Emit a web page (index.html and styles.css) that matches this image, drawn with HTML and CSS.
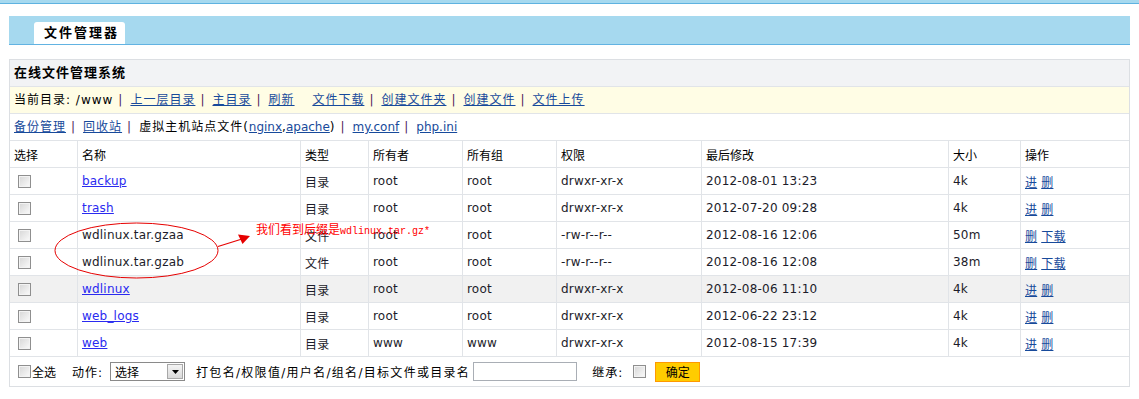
FILE: index.html
```html
<!DOCTYPE html>
<html lang="zh-CN">
<head>
  <meta charset="UTF-8" />
  <title>文件管理器</title>
  <link rel="stylesheet" href="styles.css">
</head>
<body>
  <div class="topline"></div>

  <div class="page">
    <div class="tabbar">
      <span class="tab">文件管理器</span>
    </div>

    <div class="panel">
      <div class="panel-title">在线文件管理系统</div>

      <div class="navbar pathbar">
        当前目录: <span class="cur">/www</span><span class="sep">|</span><a href="#">上一层目录</a><span class="sep">|</span><a href="#">主目录</a><span class="sep">|</span><a href="#">刷新</a>
        <a href="#" class="far">文件下载</a><span class="sep">|</span><a href="#">创建文件夹</a><span class="sep">|</span><a href="#">创建文件</a><span class="sep">|</span><a href="#">文件上传</a>
      </div>

      <div class="navbar">
        <a href="#">备份管理</a><span class="sep">|</span><a href="#">回收站</a><span class="sep">|</span>虚拟主机站点文件(<a href="#" class="latin">nginx</a><span class="latin">,</span><a href="#" class="latin">apache</a>)<span class="sep">|</span><a href="#" class="latin">my.conf</a><span class="sep">|</span><a href="#" class="latin">php.ini</a>
      </div>

      <table class="files">
        <colgroup>
          <col style="width:68px"><col style="width:223px"><col style="width:68px">
          <col style="width:94px"><col style="width:94px"><col style="width:145px">
          <col style="width:247px"><col style="width:72px"><col style="width:108px">
        </colgroup>
        <thead>
          <tr>
            <th>选择</th><th>名称</th><th>类型</th><th>所有者</th><th>所有组</th>
            <th>权限</th><th>最后修改</th><th>大小</th><th>操作</th>
          </tr>
        </thead>
        <tbody>
          <tr>
            <td><input type="checkbox" class="cb"></td>
            <td><a href="#" class="dir">backup</a></td>
            <td>目录</td><td>root</td><td>root</td><td>drwxr-xr-x</td>
            <td>2012-08-01 13:23</td><td>4k</td>
            <td class="ops"><a href="#">进</a> <a href="#">删</a></td>
          </tr>
          <tr>
            <td><input type="checkbox" class="cb"></td>
            <td><a href="#" class="dir">trash</a></td>
            <td>目录</td><td>root</td><td>root</td><td>drwxr-xr-x</td>
            <td>2012-07-20 09:28</td><td>4k</td>
            <td class="ops"><a href="#">进</a> <a href="#">删</a></td>
          </tr>
          <tr>
            <td><input type="checkbox" class="cb"></td>
            <td>wdlinux.tar.gzaa</td>
            <td>文件</td><td>root</td><td>root</td><td>-rw-r--r--</td>
            <td>2012-08-16 12:06</td><td>50m</td>
            <td class="ops"><a href="#">删</a> <a href="#">下载</a></td>
          </tr>
          <tr>
            <td><input type="checkbox" class="cb"></td>
            <td>wdlinux.tar.gzab</td>
            <td>文件</td><td>root</td><td>root</td><td>-rw-r--r--</td>
            <td>2012-08-16 12:08</td><td>38m</td>
            <td class="ops"><a href="#">删</a> <a href="#">下载</a></td>
          </tr>
          <tr class="hover">
            <td><input type="checkbox" class="cb"></td>
            <td><a href="#" class="dir">wdlinux</a></td>
            <td>目录</td><td>root</td><td>root</td><td>drwxr-xr-x</td>
            <td>2012-08-06 11:10</td><td>4k</td>
            <td class="ops"><a href="#">进</a> <a href="#">删</a></td>
          </tr>
          <tr>
            <td><input type="checkbox" class="cb"></td>
            <td><a href="#" class="dir">web_logs</a></td>
            <td>目录</td><td>root</td><td>root</td><td>drwxr-xr-x</td>
            <td>2012-06-22 23:12</td><td>4k</td>
            <td class="ops"><a href="#">进</a> <a href="#">删</a></td>
          </tr>
          <tr>
            <td><input type="checkbox" class="cb"></td>
            <td><a href="#" class="dir">web</a></td>
            <td>目录</td><td>www</td><td>www</td><td>drwxr-xr-x</td>
            <td>2012-08-15 17:39</td><td>4k</td>
            <td class="ops"><a href="#">进</a> <a href="#">删</a></td>
          </tr>
        </tbody>
      </table>

      <div class="batch">
        <label class="all"><input type="checkbox" class="cb">全选</label>
        <span class="action">动作:</span>
        <span class="select">
          <span class="select-val">选择</span>
          <span class="select-btn">
            <svg width="7" height="4" viewBox="0 0 7 4"><path d="M0 0h7L3.5 4z" fill="#000"/></svg>
          </span>
        </span>
        <span class="hint">打包名/权限值/用户名/组名/目标文件或目录名</span>
        <input type="text" class="target">
        <span class="inherit">继承:</span>
        <input type="checkbox" class="cb">
        <button class="ok">确定</button>
      </div>
    </div>

    <svg class="note" width="1139" height="399" viewBox="0 0 1139 399">
      <ellipse cx="136.5" cy="250.5" rx="81.5" ry="27.5" fill="none" stroke="#e60000" stroke-width="1"/>
      <line x1="218" y1="246.5" x2="242" y2="239" stroke="#e60000" stroke-width="1.2"/>
      <polygon points="250,236 238,234.5 242.5,244" fill="#e60000"/>
    </svg>
    <div class="note-text">我们看到后缀是<span class="mono">wdlinux.tar.gz*</span></div>
  </div>
</body>
</html>
```

FILE: styles.css
```css
body {
  margin: 0;
  font-family: "DejaVu Sans", "Noto Sans CJK SC", sans-serif;
  font-size: 12px;
  color: #222;
  background: #fff;
}

* {
  box-sizing: border-box;
}

.topline {
  height: 4px;
  background: #a6d9ef;
  border-bottom: 1px solid #5eb2e0;
}

.page {
  padding: 12px 9px 0 9px;
}

.tabbar {
  display: flex;
  align-items: flex-end;
  height: 29px;
  background: #a6d9ef;
  border-bottom: 1px solid #62b3e2;
  padding-left: 25px;
}

.tab {
  width: 91px;
  height: 22px;
  line-height: 22px;
  padding-left: 10px;
  background: #fff;
  border-radius: 3px 3px 0 0;
  font-weight: bold;
  font-size: 13px;
  letter-spacing: 2px;
  color: #000;
}

.panel {
  margin-top: 14px;
  width: 1121px;
  border: 1px solid #dcdfe3;
}

.panel-title {
  height: 27px;
  line-height: 26px;
  padding-left: 4px;
  background: #f2f3f5;
  border-bottom: 1px solid #e1e4e8;
  font-weight: bold;
  font-size: 13px;
  letter-spacing: 1px;
  color: #000;
}

.navbar {
  height: 27px;
  line-height: 26px;
  padding-left: 4px;
  border-bottom: 1px solid #e1e4e8;
  letter-spacing: 1px;
  color: #000;
  white-space: nowrap;
}

.pathbar {
  background: #fffde5;
}

.cur {
  letter-spacing: 1px;
}

.navbar a {
  color: #174a9b;
}

.navbar .latin {
  letter-spacing: 0;
}

.sep {
  letter-spacing: 0;
  margin: 0 8px 0 5px;
  color: #4b1a5a;
}

.far {
  margin-left: 13px;
}

.files {
  width: 1119px;
  table-layout: fixed;
  border-collapse: separate;
  border-spacing: 0;
}

.files th,
.files td {
  height: 27px;
  padding: 0 0 0 4px;
  text-align: left;
  font-weight: normal;
  color: #000;
  border-right: 1px solid #e1e4e8;
  border-bottom: 1px solid #e1e4e8;
  white-space: nowrap;
  vertical-align: middle;
}

.files td {
  color: #1c1c2a;
  letter-spacing: 0.2px;
}

.files th:last-child,
.files td:last-child {
  border-right: none;
}

.files tr.hover td {
  background: #f1f1f1;
}

.files a.dir {
  color: #2a2af0;
}

.ops a {
  color: #174a9b;
}

.cb {
  appearance: none;
  -webkit-appearance: none;
  width: 13px;
  height: 13px;
  margin: 0 0 0 4px;
  border: 1px solid #8f8f8f;
  box-shadow: inset 0 0 0 1px #f3f3f3;
  background: linear-gradient(135deg, #d6d6d6, #fbfbfb);
  vertical-align: middle;
}

.batch {
  display: flex;
  align-items: center;
  height: 29px;
  padding-left: 4px;
  color: #000;
}

.all {
  display: flex;
  align-items: center;
}

.all .cb {
  margin-right: 1px;
}

.action {
  margin-left: 16px;
  letter-spacing: 1px;
}

.select {
  display: flex;
  align-items: center;
  justify-content: space-between;
  width: 75px;
  height: 19px;
  margin-left: 7px;
  padding: 0 1px 0 4px;
  border: 1px solid #8a8a8a;
  background: #fff;
}

.select-btn {
  display: flex;
  align-items: center;
  justify-content: center;
  width: 16px;
  height: 15px;
  border: 1px solid #a8a8a8;
  background: linear-gradient(#f4f4f4, #d9d9d9);
}

.hint {
  margin-left: 11px;
  letter-spacing: 1.3px;
}

.target {
  width: 104px;
  height: 19px;
  margin-left: 3px;
  border: 1px solid #a9aeb5;
}

.inherit {
  margin-left: 15px;
  letter-spacing: 1px;
}

.inherit + .cb {
  margin-left: 10px;
}

.ok {
  width: 45px;
  height: 20px;
  margin-left: 9px;
  padding: 0;
  background: #ffcc00;
  border: 1px solid #ff9900;
  font-family: inherit;
  font-size: 12px;
  color: #000;
}

.note {
  position: absolute;
  top: 0;
  left: 0;
  pointer-events: none;
}

.note-text {
  position: absolute;
  left: 256px;
  top: 223px;
  color: #ff0000;
  font-size: 12px;
  line-height: 14px;
  white-space: nowrap;
}

.mono {
  font-family: "Liberation Mono", monospace;
  font-size: 10px;
}
```
